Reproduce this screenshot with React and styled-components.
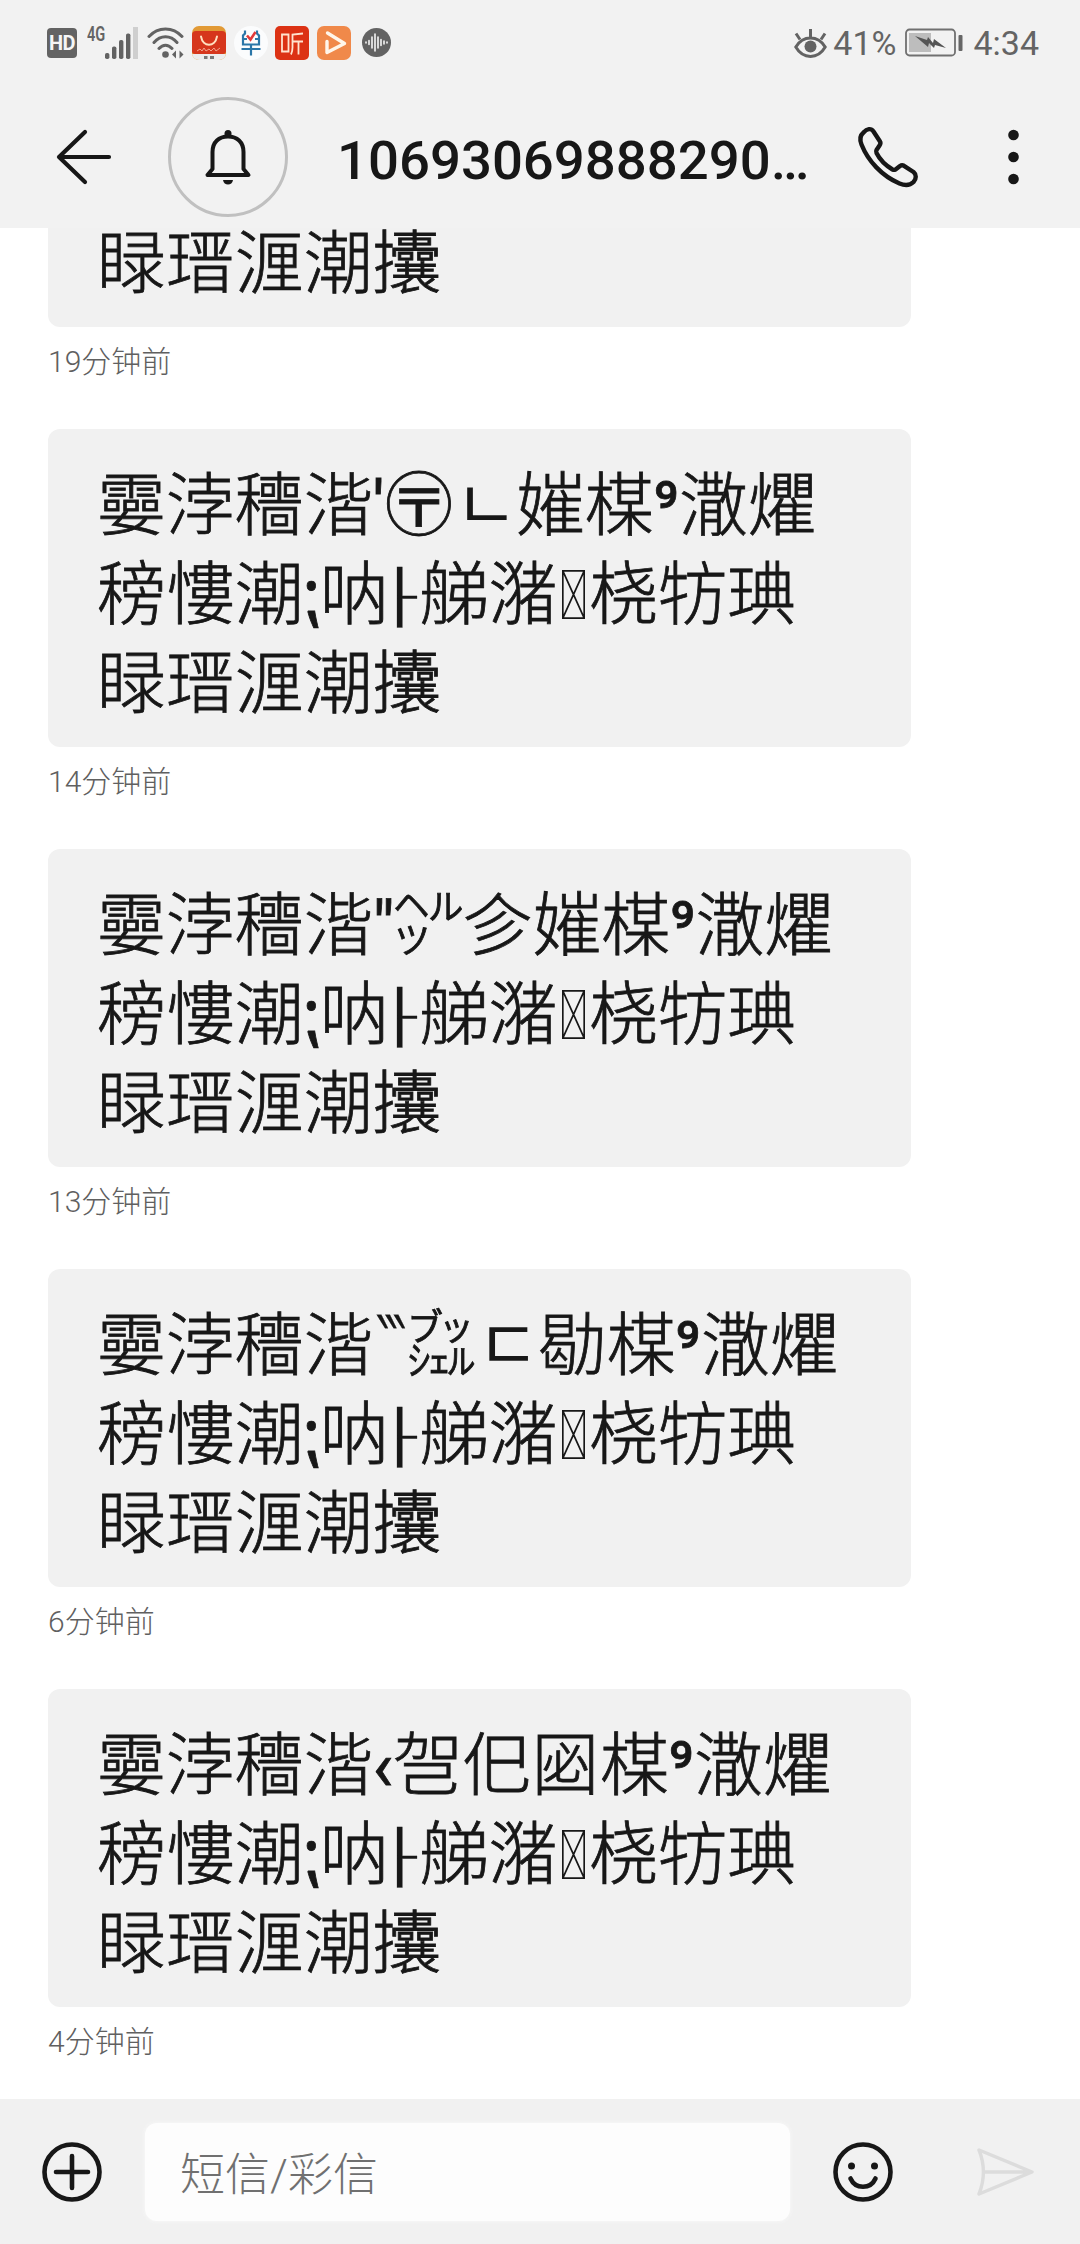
import React from "react";
import styled, { createGlobalStyle } from "styled-components";

const UI_FONT = 'Roboto, "Noto Sans CJK SC", sans-serif';

const GlobalStyle = createGlobalStyle`
  *, *::before, *::after { box-sizing: border-box; }
  body { margin: 0; background: #fff; }
`;

const Screen = styled.div`
  width: 1080px;
  height: 2244px;
  display: flex;
  flex-direction: column;
  background: #fff;
  color: #171717;
  font-family: ${UI_FONT};
  overflow: hidden;
`;

const Top = styled.header`
  flex: none;
  height: 228px;
  background: #f2f2f2;
`;

const StatusBar = styled.div`
  height: 85px;
  padding: 0 41px 0 47px;
  display: flex;
  align-items: center;
  justify-content: space-between;
  color: #646464;
`;

const StatusGroup = styled.div`
  display: flex;
  align-items: center;
  height: 100%;
`;

const StatusIcon = styled.svg`
  flex: none;
  display: block;
  width: ${(p) => p.$w}px;
  height: ${(p) => p.$h || 34}px;
  margin-left: ${(p) => p.$gap || 0}px;
`;

const StatusText = styled.span`
  font-size: 34px;
  line-height: 40px;
  margin-left: ${(p) => p.$gap || 0}px;
  padding-top: 1px;
`;

const HdBadge = styled.span`
  width: 30px;
  height: 30px;
  border-radius: 4px;
  background: #636363;
  color: #f6f6f6;
  font-size: 20px;
  font-weight: 700;
  line-height: 31px;
  text-align: center;
  letter-spacing: -0.5px;
`;

const NetType = styled.span`
  align-self: flex-start;
  margin: 22px 0 0 10px;
  width: 18px;
  font-size: 20px;
  line-height: 24px;
  font-weight: 600;
  transform: scaleX(0.73);
  transform-origin: 0 0;
`;

const AppTile = styled.span`
  width: 34px;
  height: 34px;
  margin-left: ${(p) => p.$gap}px;
  border-radius: ${(p) => p.$round || 7}px;
  background: ${(p) => p.$bg};
  overflow: hidden;
  svg { display: block; }
`;

const TitleBar = styled.div`
  height: 143px;
  display: flex;
  align-items: center;
  padding: 1px 61px 0 56px;
`;

const Avatar = styled.div`
  width: 120px;
  height: 120px;
  margin-left: 56px;
  border: 3px solid #c0c0c0;
  border-radius: 50%;
  display: flex;
  align-items: center;
  justify-content: center;
`;

const Title = styled.h1`
  flex: 1;
  margin: 0 0 0 49px;
  padding-top: 5px;
  font-size: 54.5px;
  line-height: 66px;
  font-weight: 500;
  white-space: nowrap;
`;

const Glyph = styled.svg`
  flex: none;
  display: block;
  overflow: visible;
  fill: none;
  stroke: ${(p) => p.$color || "#171717"};
  stroke-linecap: round;
  stroke-linejoin: round;
  margin-left: ${(p) => p.$gap || 0}px;
`;

const List = styled.main`
  flex: 1;
  min-height: 0;
  overflow: hidden;
  display: flex;
  flex-direction: column;
  justify-content: flex-end;
  gap: 53px;
  padding: 0 0 43px 48px;
`;

const Message = styled.article`
  flex: none;
`;

const Bubble = styled.div`
  width: 863px;
  height: 318px;
  padding: 33px 0 18px 49px;
  border-radius: 12px;
  background: #f1f1f1;
  font-family: Roboto, "Noto Sans CJK SC Light", "Noto Sans CJK SC", sans-serif;
  -webkit-text-stroke: 0.8px #171717;
  font-size: 68.9px;
  line-height: 89px;
  white-space: nowrap;
`;

const Line = styled.div`
  height: 89px;
`;

const Jamo = styled.span`
  font-family: "Noto Sans CJK SC", sans-serif;
  line-height: 0;
  -webkit-text-stroke: 0;
  margin: 0 -2px 0 1px;
`;

const Narrow = styled.span`
  display: inline-block;
  width: ${(p) => p.$w}px;
  font-family: "Noto Sans CJK SC", sans-serif;
  line-height: 1;
  -webkit-text-stroke: 0.2px #171717;
  transform-origin: 0 15px;
  transform: ${(p) => p.$fit};
`;

const Tofu = styled.svg`
  width: 23px;
  height: 49px;
  margin: 0 4px 0 5px;
  vertical-align: baseline;
`;

const Time = styled.time`
  display: block;
  margin-top: 20px;
  font-size: 30px;
  line-height: 30px;
  height: 29px;
  font-weight: 300;
  color: #606060;
`;

const Composer = styled.footer`
  flex: none;
  height: 145px;
  padding: 0 45px 0 44px;
  display: flex;
  align-items: center;
  background: #f1f1f1;
`;

const Field = styled.div`
  width: 647px;
  height: 98px;
  margin-left: 45px;
  padding-left: 35px;
  display: flex;
  align-items: center;
  border-radius: 12px;
  background: #fdfdfd;
  box-shadow: 0 0 4px #fafafa;
  font-size: 45px;
  font-weight: 300;
  color: #707070;
`;

const messages = [
  { code: "′〶ㄴ㜠", time: "19分钟前" },
  { code: "′〶ㄴ㜠", time: "14分钟前" },
  { code: "″㌹㐱㜠", time: "13分钟前" },
  { code: "‷㌴ㄷ㔠", time: "6分钟前" },
  { code: "‹㠰㐶㘠", time: "4分钟前" },
];

function Code({ text }) {
  return [...text].map((ch, i) => {
    if (ch === "‷") return <Narrow key={i} $w={34} $fit="translate(5px, -6px) scale(0.76)">{ch}</Narrow>;
    if (ch === "ㄴ" || ch === "ㄷ") return <Jamo key={i}>{ch}</Jamo>;
    return ch;
  });
}

function MissingGlyph() {
  return (
    <Tofu viewBox="0 0 23 49" fill="none" stroke="#171717" strokeWidth="1.700">
      <path d="M.8.8h21.4v47.4H.8zM.8.8l21.4 47.4M22.2.8L.8 48.2" />
    </Tofu>
  );
}

function SignalIcon() {
  return (
    <StatusIcon $w={33} $h={32} viewBox="0 0 33 32" fill="#636363">
      <rect x="28" y="0" width="5" height="32" fill="#cfcfcf" />
      <rect x="0" y="26" width="4.4" height="6" rx="1.8" />
      <rect x="7" y="19.5" width="4.4" height="12.5" rx="1.8" />
      <rect x="14" y="13" width="4.4" height="19" rx="1.8" />
      <rect x="21" y="6.5" width="4.4" height="25.5" rx="1.8" />
    </StatusIcon>
  );
}

function WifiIcon() {
  return (
    <StatusIcon $w={37} $h={32} $gap={9} viewBox="0 0 37 32" fill="none" stroke="#636363" strokeWidth="3" strokeLinecap="round">
      <path d="M2 9.5C11-.6 26-.6 35 9.5M7 15.5c6.500-7.600 16.500-7.600 23 0M12 21.500c4-4.400 9-4.400 13 0" />
      <circle cx="18.500" cy="27.500" r="3.300" fill="#636363" stroke="none" />
      <path d="M25 27.500l4-4v8zM36.500 27.500l-4 4v-8z" fill="#636363" stroke="none" />
    </StatusIcon>
  );
}

export default function App() {
  return (
    <>
      <GlobalStyle />
      <Screen>
        <Top>
          <StatusBar>
            <StatusGroup>
              <HdBadge>HD</HdBadge>
              <NetType>4G</NetType>
              <SignalIcon />
              <WifiIcon />
              <AppTile $gap={8} $bg="#e29a35">
                <svg width="34" height="34" viewBox="0 0 34 34" fill="none">
                  <path d="M0 9q0-4 4-4h26q4 0 4 4v16q0 3-3 3H3q-3 0-3-3z" fill="#d6361c" />
                  <path d="M0 28h34v6H0z" fill="#ececec" />
                  <path d="M9 10.500c2 11 14 11 16 0" stroke="#ffe0c0" strokeWidth="2" strokeLinecap="round" />
                  <path d="M5 25l3-2 2 2 2-3 2 3 3-2 2 2 3-3 2 3 4-3" stroke="#f3a48e" strokeWidth="1" />
                  <path d="M12 31.500h3.500M18 31.500h4" stroke="#777" strokeWidth="3" />
                </svg>
              </AppTile>
              <AppTile $gap={8} $bg="#fbfcfd" $round={17}>
                <svg width="34" height="34" viewBox="0 0 34 34" fill="none" stroke="#2a76a8" strokeWidth="2.200">
                  <path d="M11 4.500v3l-2 2v9h16v-9l-2-2v-3M9 13h4M21 13h4M17 18.500v11M7.500 23h19" />
                  <path d="M13 9.500l3.500 4 5-7.500" stroke="#e03a3a" strokeWidth="2.600" />
                </svg>
              </AppTile>
              <AppTile $gap={7} $bg="#dc3214" $round={5}>
                <svg width="34" height="34" viewBox="0 0 34 34" fill="none" stroke="#ffe3cf" strokeWidth="1.800">
                  <path d="M7 8.500h6.500v17H7zM28 7.500l-10.500 1v13q0 4-1.500 7M17.500 15.500H28M23.500 15.500v13" />
                </svg>
              </AppTile>
              <AppTile $gap={8} $bg="#f0894a">
                <svg width="34" height="34" viewBox="0 0 34 34" fill="none" stroke="#fff6ea" strokeWidth="3.400" strokeLinecap="round" strokeLinejoin="round">
                  <path d="M10.500 7l17 10.500L10 26.500V15.500" />
                </svg>
              </AppTile>
              <StatusIcon $w={29} $h={29} $gap={11} viewBox="0 0 29 29" stroke="#f5f5f5" strokeWidth="1.600" strokeLinecap="round">
                <circle cx="14.500" cy="14.500" r="14.500" fill="#636363" stroke="none" />
                <path d="M4 14v1M7 12.500v4M10 9v11M13 6v17M16 9v11M19 11.500v6M22 13v3M25 14v1" />
              </StatusIcon>
            </StatusGroup>
            <StatusGroup>
              <StatusIcon $w={33} $h={32} viewBox="0 0 33 32" fill="none" stroke="#636363" strokeWidth="3">
                <path d="M1.800 20C9 8 24 8 31.200 20 24 32.500 9 32.500 1.800 20zM16.500 2v8M2 6.500l4 6M31 6.500l-4 6" />
                <circle cx="16.500" cy="19.500" r="6" fill="#636363" stroke="none" />
              </StatusIcon>
              <StatusText $gap={6}>41%</StatusText>
              <StatusIcon $w={58} $h={29} $gap={9} viewBox="0 0 58 29" fill="none">
                <rect x="1" y="1.500" width="49" height="26" rx="3.500" stroke="#707070" strokeWidth="1.800" />
                <rect x="4" y="5" width="22" height="19" fill="#bdbdbd" />
                <path d="M10 8l12 4 1-3 5 6 1-4 12 9-11-3-1 3-5-5-1 4z" fill="#555" />
                <rect x="53.500" y="7" width="4" height="16" rx="1" fill="#666" />
              </StatusIcon>
              <StatusText $gap={10}>4:34</StatusText>
            </StatusGroup>
          </StatusBar>
          <TitleBar>
            <Glyph width="56" height="56" viewBox="0 0 56 56" strokeWidth="4.200">
              <path d="M29 3L3 28l26 25M3 28h50" />
            </Glyph>
            <Avatar>
              <Glyph width="46" height="56" viewBox="0 0 46 56" strokeWidth="4">
                <path d="M7.500 40V23C7.500 13 14 7.500 23 7.500S38.500 13 38.500 23v17l5 6h-41z" />
                <circle cx="23" cy="4.500" r="3.500" fill="#171717" stroke="none" />
                <path d="M18 51h10c-.500 3-2.500 4.500-5 4.500s-4.500-1.500-5-4.500z" fill="#171717" stroke="none" />
              </Glyph>
            </Avatar>
            <Title>10693069888290…</Title>
            <Glyph width="60" height="60" viewBox="0 0 60 60" strokeWidth="4.400">
              <path d="M5.500 5.500C9 1.500 13 1 15.500 4.500L22 14.500c1 1.500.500 2.500-.500 4l-3 4.500c-.500 1-.500 2 0 3C22 33 27 38 34.500 42.500c1 .500 2 .500 3 0l4.500-3.500c1.500-1 2.500-1 4-.200L55.500 45c3 2.500 3 6.500 0 10-3.500 3.500-8 4-14 1.500C24 49 10 34 3.500 17.500 1.500 12.500 2 8.500 5.500 5.500z" />
            </Glyph>
            <Glyph width="11" height="56" viewBox="0 0 11 56" $gap={90}>
              <g fill="#171717" stroke="none">
                <circle cx="5.500" cy="6" r="5.300" />
                <circle cx="5.500" cy="28" r="5.300" />
                <circle cx="5.500" cy="50" r="5.300" />
              </g>
            </Glyph>
          </TitleBar>
        </Top>
        <List>
          {messages.map((m) => (
            <Message key={m.time}>
              <Bubble>
                <Line>孁浡穯湝<Code text={m.code} />楳⁹潵爠</Line>
                <Line>
                  䅭慺潮⁏呐
                  <Narrow $w={31} $fit="translate(-8px, 0) scale(1.4, 0.88)">⸠</Narrow>
                  䑯潴
                  <MissingGlyph />
                  桡牥琠
                </Line>
                <Line>睩瑨湹潮攮</Line>
              </Bubble>
              <Time>{m.time}</Time>
            </Message>
          ))}
        </List>
        <Composer>
          <Glyph width="56" height="60" viewBox="0 0 56 60" strokeWidth="4.600">
            <circle cx="28" cy="30" r="27.500" />
            <path d="M28 14v32M12 30h32" />
          </Glyph>
          <Field>短信/彩信</Field>
          <Glyph width="60" height="60" viewBox="0 0 60 60" strokeWidth="4.600" $gap={43}>
            <circle cx="30" cy="30" r="27.500" />
            <path d="M17.500 36.500c5 11 20 11 25 0" />
            <g fill="#171717" stroke="none">
              <circle cx="18.500" cy="24" r="3.500" />
              <circle cx="41.500" cy="24" r="3.500" />
            </g>
          </Glyph>
          <Glyph width="58" height="50" viewBox="0 0 58 50" strokeWidth="3.400" $gap={84} $color="#dcdcdc">
            <path d="M2 3l53 22L2 47c6-15 6-29 0-44zM8 25h46" />
          </Glyph>
        </Composer>
      </Screen>
    </>
  );
}
